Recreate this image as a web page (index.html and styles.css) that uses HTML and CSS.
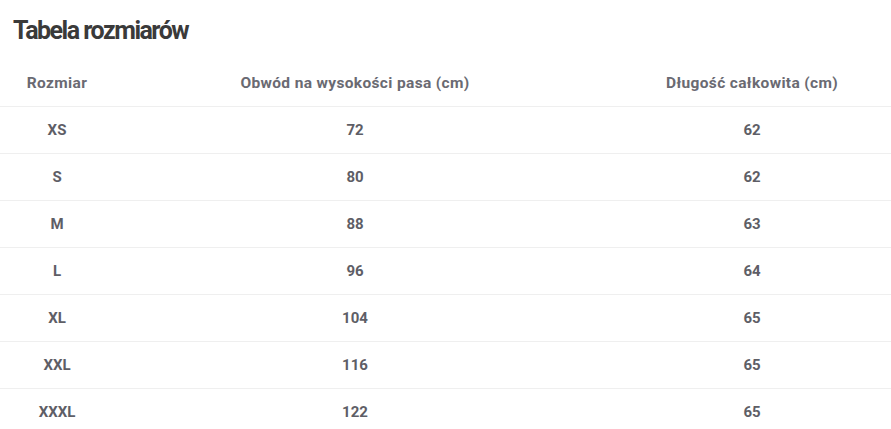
FILE: index.html
```html
<!DOCTYPE html>
<html lang="pl">
<head>
<meta charset="utf-8">
<title>Tabela rozmiarów</title>
<link rel="stylesheet" href="styles.css">
</head>
<body>
<h2 class="title">Tabela rozmiarów</h2>
<div class="table">
  <div class="row head">
    <div class="c1">Rozmiar</div>
    <div class="c2">Obwód na wysokości pasa (cm)</div>
    <div class="c3">Długość całkowita (cm)</div>
  </div>
  <div class="row"><div class="c1">XS</div><div class="c2">72</div><div class="c3">62</div></div>
  <div class="row"><div class="c1">S</div><div class="c2">80</div><div class="c3">62</div></div>
  <div class="row"><div class="c1">M</div><div class="c2">88</div><div class="c3">63</div></div>
  <div class="row"><div class="c1">L</div><div class="c2">96</div><div class="c3">64</div></div>
  <div class="row"><div class="c1">XL</div><div class="c2">104</div><div class="c3">65</div></div>
  <div class="row"><div class="c1">XXL</div><div class="c2">116</div><div class="c3">65</div></div>
  <div class="row"><div class="c1">XXXL</div><div class="c2">122</div><div class="c3">65</div></div>
</div>
</body>
</html>
```
FILE: styles.css
```css
html, body {
  margin: 0;
  padding: 0;
  background: #fff;
  overflow: hidden;
}
body {
  font-family: Roboto, "Liberation Sans", sans-serif;
}
.title {
  margin: 0;
  padding: 16px 0 0 13px;
  height: 37px;
  font-size: 25px;
  line-height: 30px;
  font-weight: 700;
  color: #3a3a3a;
  letter-spacing: -1.5px;
}
.table {
  margin-top: 7px;
}
.row {
  display: grid;
  grid-template-columns: 114px 482px 295px;
  height: 46px;
  align-items: center;
  border-bottom: 1px solid #efefef;
  font-size: 15px;
  font-weight: 700;
  color: #5e5e66;
  text-align: center;
}
.row:last-child {
  border-bottom: none;
}
.head {
  font-size: 15.5px;
  font-weight: 700;
  color: #6a6a72;
  letter-spacing: 0.35px;
}
.c3 {
  padding-left: 17px;
}
```
